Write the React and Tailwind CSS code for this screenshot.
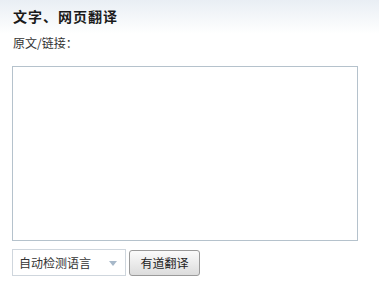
export default function App() {
  const font = { fontFamily: '"Noto Sans CJK SC", "Noto Sans", sans-serif' };
  return (
    <div className="w-[379px] h-[282px] bg-white text-[#333]" style={font}>
      {/* header strip */}
      <div className="h-[34px] bg-gradient-to-b from-[#e9eef4] to-white px-[13px] pt-[7px]">
        <h3 className="text-[14px] leading-[18px] font-bold tracking-[1px] text-[#1a1a1a]">文字、网页翻译</h3>
      </div>
      <div className="px-[12px]">
        <p className="text-[12px] leading-[16px] mt-[1px] ml-[1px] text-[#333]">原文/链接：</p>
        <textarea className="block mt-[15px] w-[346px] h-[175px] border border-[#b5c2cc] resize-none outline-none p-1 text-[12px]" />
        <div className="flex items-start gap-[3px] mt-[8px]">
          <div className="relative w-[114px] h-[27px] border border-[#cfd6dd] bg-white flex items-center pl-[6px] text-[12px] text-[#333]">
            自动检测语言
            <span className="absolute right-[8px] top-[11px] w-0 h-0 border-l-[4px] border-r-[4px] border-t-[5px] border-l-transparent border-r-transparent border-t-[#a7b8c9]" />
          </div>
          <button className="mt-[1px] w-[71px] h-[26px] rounded-[3px] border border-[#9a9a9a] bg-gradient-to-b from-[#fbfbfb] to-[#dcdcdc] text-[12px] text-[#222]">
            有道翻译
          </button>
        </div>
      </div>
    </div>
  );
}
